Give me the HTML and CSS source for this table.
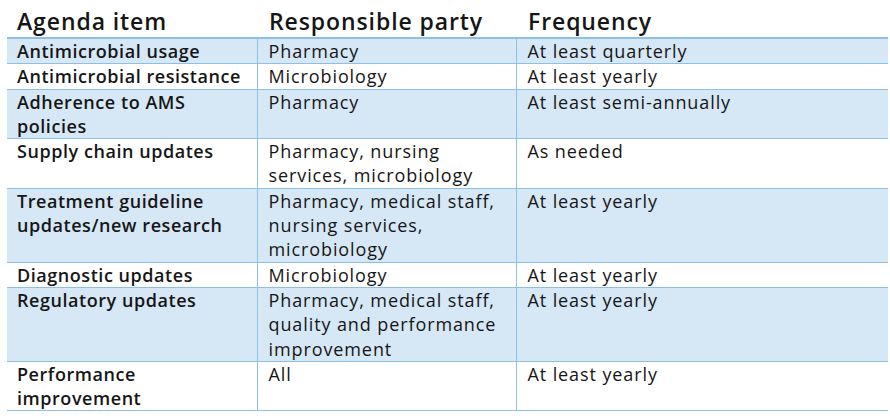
FILE: index.html
```html
<!DOCTYPE html>
<html>
<head>
<meta charset="utf-8">
<link rel="stylesheet" href="styles.css">
</head>
<body>
<table class="agenda">
  <colgroup>
    <col class="c1"><col class="c2"><col class="c3">
  </colgroup>
  <thead>
    <tr><th>Agenda item</th><th>Responsible party</th><th>Frequency</th></tr>
  </thead>
  <tbody>
    <tr class="blue"><td class="item">Antimicrobial usage</td><td>Pharmacy</td><td>At least quarterly</td></tr>
    <tr><td class="item">Antimicrobial resistance</td><td>Microbiology</td><td>At least yearly</td></tr>
    <tr class="blue"><td class="item">Adherence to AMS policies</td><td>Pharmacy</td><td>At least semi-annually</td></tr>
    <tr><td class="item">Supply chain updates</td><td>Pharmacy, nursing services, microbiology</td><td>As needed</td></tr>
    <tr class="blue"><td class="item">Treatment guideline updates/new research</td><td>Pharmacy, medical staff, nursing services, microbiology</td><td>At least yearly</td></tr>
    <tr><td class="item">Diagnostic updates</td><td>Microbiology</td><td>At least yearly</td></tr>
    <tr class="blue"><td class="item">Regulatory updates</td><td>Pharmacy, medical staff, quality and performance improvement</td><td>At least yearly</td></tr>
    <tr><td class="item">Performance improvement</td><td>All</td><td>At least yearly</td></tr>
  </tbody>
</table>
</body>
</html>
```
FILE: styles.css
```css
html, body {
  margin: 0;
  padding: 0;
  background: #ffffff;
}
body {
  font-family: "Open Sans", "Noto Sans", sans-serif;
  color: #161616;
}
.agenda {
  margin-left: 7px;
  width: 881px;
  border-collapse: collapse;
  table-layout: fixed;
}
.c1 { width: 250px; }
.c2 { width: 259px; }
.c3 { width: auto; }
.agenda th {
  text-align: left;
  font-size: 23px;
  font-weight: 600;
  letter-spacing: 0.9px;
  line-height: 28px;
  padding: 7px 0 2px 10px;
  border-bottom: 2px solid #8dc0e6;
}
.agenda th + th { padding-left: 12px; }
.agenda td {
  vertical-align: top;
  font-size: 18px;
  letter-spacing: 0.9px;
  line-height: 24.3px;
  padding: 0 8px 0 11px;
  border: 1px solid #8dc0e6;
  border-top: none;
}
.agenda td:first-child { border-left: none; }
.agenda td:last-child { border-right: none; }
.agenda td.item {
  font-weight: 600;
  letter-spacing: 0.55px;
  padding-left: 10px;
}
.agenda tr.blue td {
  background: #d6e7f5;
}
```
